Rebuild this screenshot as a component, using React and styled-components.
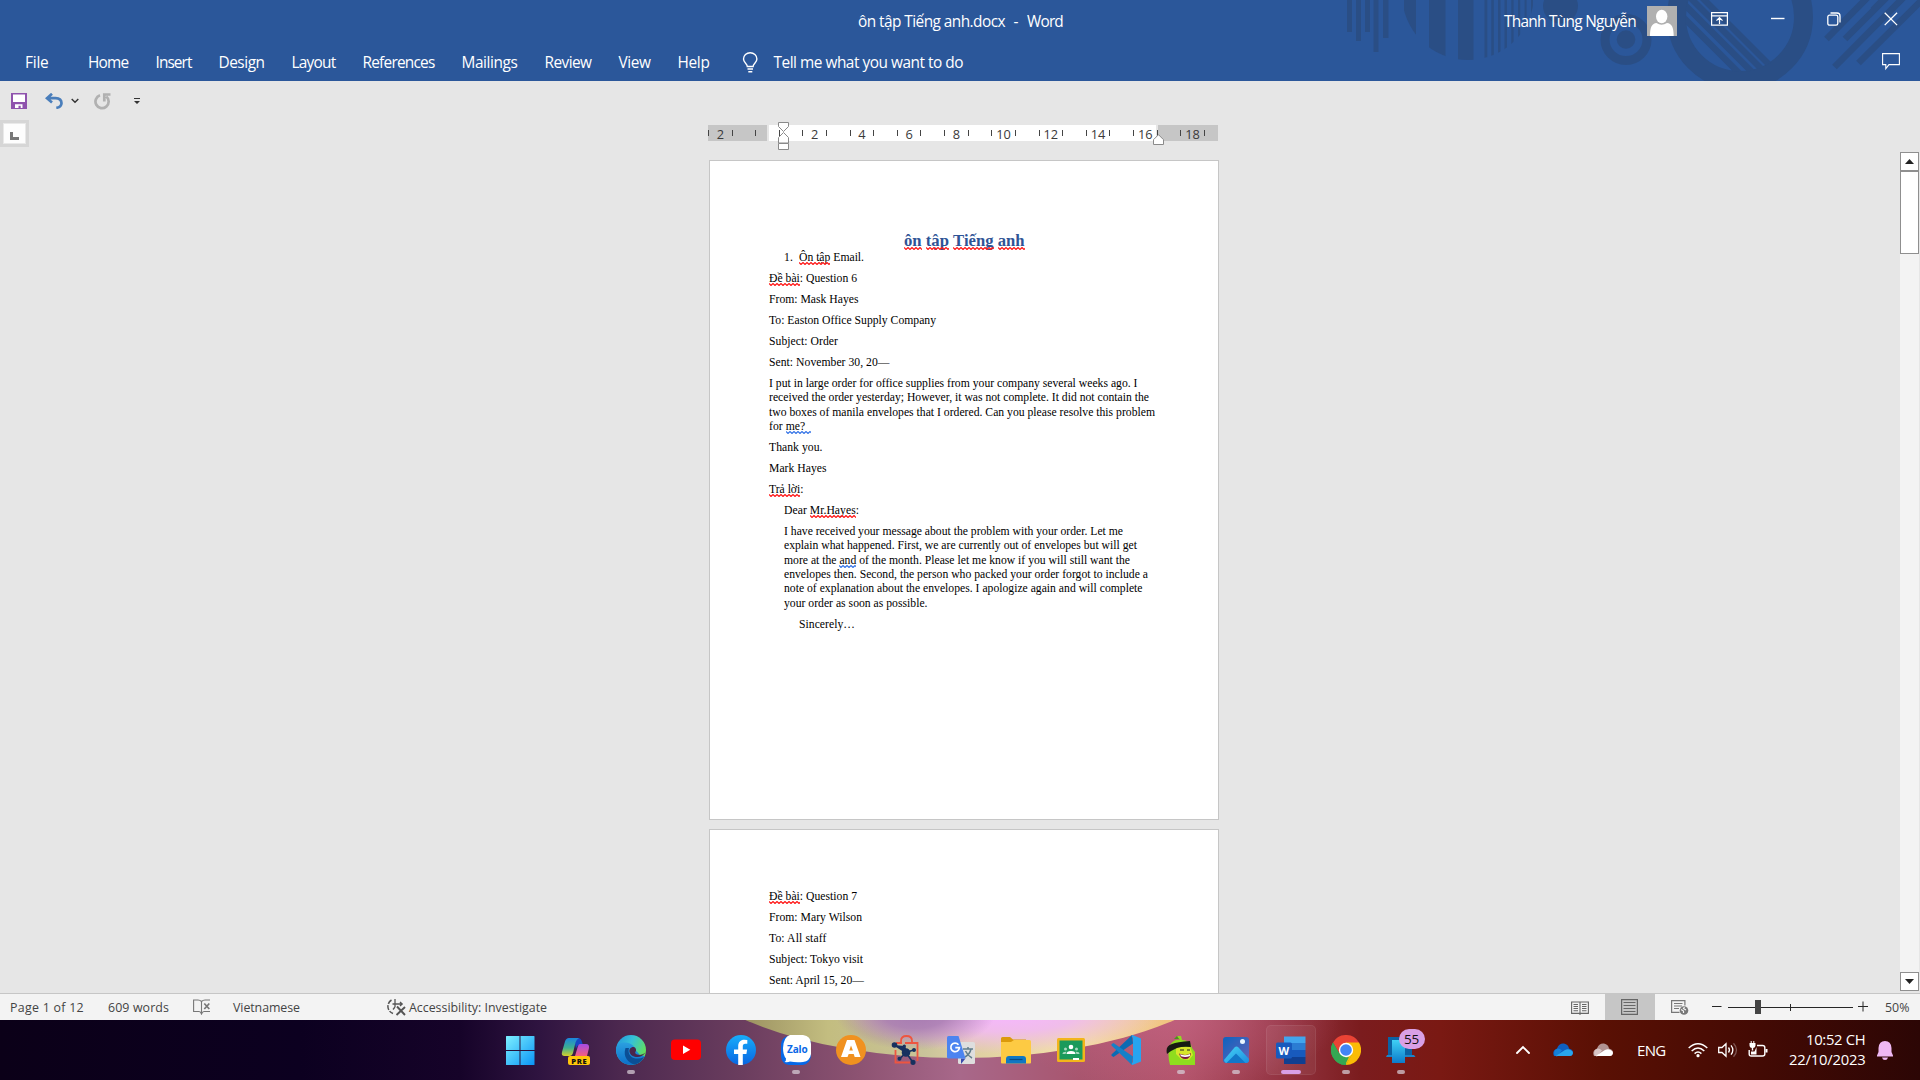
import React, { useLayoutEffect, useRef, useState } from "react";
import styled, { createGlobalStyle } from "styled-components";

const UI = `"Open Sans", "Noto Sans", sans-serif`;
const SERIF = `"Liberation Serif", "Times New Roman", serif`;

const Global = createGlobalStyle`
  * { box-sizing: border-box; }
  html, body { margin: 0; padding: 0; }
  body { width: 1920px; height: 1080px; overflow: hidden; font-family: ${UI}; background: #e6e6e6; }
  svg { display: block; flex: none; }
`;

/* Text that is tracked so that its run is exactly `w` pixels wide. */
const Run = styled.span`
  display: inline-block;
  white-space: pre;
`;
function Fit({ w, children }) {
  const ref = useRef(null);
  const [ls, setLs] = useState(0);
  useLayoutEffect(() => {
    const el = ref.current;
    const n = el.textContent.length;
    const natural = el.getBoundingClientRect().width;
    setLs((w - natural) / n);
  }, [w]);
  return <Run ref={ref} style={{ letterSpacing: `${ls}px` }}>{children}</Run>;
}

const Screen = styled.div`
  width: 1920px;
  height: 1080px;
  display: flex;
  flex-direction: column;
  overflow: hidden;
`;

/* ---------- header ---------- */
const Header = styled.header`
  position: relative;
  height: 81px;
  flex: none;
  background: #2b579a;
  color: #fff;
  font-size: 15.4px;
`;
const Pattern = styled.svg`
  position: absolute;
  right: 0;
  top: 0;
`;
const TitleBar = styled.div`
  position: relative;
  height: 42px;
  display: flex;
  align-items: center;
  padding-left: 858px;
`;
const FileName = styled.div`
  width: 646px;
  display: flex;
  gap: 8.5px;
  padding-top: 1.5px;
`;
const UserName = styled.div`
  width: 143px;
  padding-top: 1.5px;
`;
const WindowButtons = styled.div`
  display: flex;
  align-items: center;
  height: 30px;
  margin-left: 34px;
  padding-bottom: 4px;
  gap: 42.7px;
`;
const TabBar = styled.nav`
  position: relative;
  height: 39px;
  display: flex;
  align-items: center;
  gap: 27px;
  padding: 1px 20px 0 25px;
`;
const FileTab = styled.div`
  margin-right: 12.5px;
`;
const TellMe = styled.div`
  display: flex;
  align-items: center;
  gap: 15px;
  margin-left: 5px;
  flex: 1;
`;

const HeaderPattern = () => (
  <Pattern width="600" height="81" viewBox="1320 0 600 81" fill="#2a4e85">
    <defs>
      <clipPath id="ball"><circle cx="1468" cy="-6" r="66" /></clipPath>
      <clipPath id="lens"><circle cx="1740" cy="17" r="55" /></clipPath>
    </defs>
    <path d="M1347 0h5v32h-5zM1356 0h5v41h-5zM1365 0h5v32h-5zM1373.5 0h5v52h-5zM1383 0h5.5v38h-5.5z" />
    <g clipPath="url(#ball)">
      <path d="M1404 0h12v60h-12zM1429 0h16.500v70h-16.500zM1458 0h15.500v70h-15.500zM1484.500 0h2.800v70h-2.800zM1491.300 0h2.500v70h-2.500zM1498 0h2.500v70h-2.500zM1504.500 0h2.500v70h-2.500zM1511.300 0h2.300v70h-2.300zM1518 0h2.200v70h-2.200zM1524.600 0h2v70h-2zM1531 0h2v70h-2z" />
    </g>
    <circle cx="1560.500" cy="6" r="17.500" />
    <circle cx="1626" cy="39.500" r="21" fill="none" stroke="#2a4e85" strokeWidth="9" />
    <circle cx="1626" cy="39.500" r="9.300" />
    <circle cx="1740" cy="17" r="63.500" fill="none" stroke="#2a4e85" strokeWidth="19" />
    <g clipPath="url(#lens)" stroke="#2a4e85" strokeWidth="6.300">
      <path d="M1646 -20l110 110M1660 -20l110 110M1672.500 -20l110 110M1684.500 -20l110 110" />
    </g>
    <g stroke="#2a4e85" strokeWidth="6.600">
      <path d="M1826.500 39L1868 -3M1845 39L1888 -4M1834.500 67L1905 -4M1858.500 63L1926 -4M1873 10L1887 -4" />
    </g>
  </Pattern>
);

const TABS = [["Home", 40.5], ["Insert", 36], ["Design", 46], ["Layout", 44], ["References", 72], ["Mailings", 56], ["Review", 47], ["View", 32], ["Help", 32]];

function AppHeader() {
  return (
    <Header>
      <HeaderPattern />
      <TitleBar>
        <FileName>
          <Fit w={147}>ôn tập Tiếng anh.docx</Fit>
          <Fit w={5}>-</Fit>
          <Fit w={36}>Word</Fit>
        </FileName>
        <UserName><Fit w={132}>Thanh Tùng Nguyễn</Fit></UserName>
        <svg width="30" height="30" viewBox="0 0 30 30">
          <path fill="#b0b0b0" d="M0 0h30v30H0z" />
          <ellipse cx="14.700" cy="10.500" rx="5.700" ry="6.700" fill="#fff" />
          <path fill="#fff" d="M3 30C3 21 5 17.500 9.500 17q5 3.600 10.500 0c4.500.5 6.700 4 6.700 13z" />
        </svg>
        <WindowButtons>
          <svg width="17" height="14" fill="none" stroke="#fff" strokeWidth="1.200">
            <path d="M.6 .6h15.800v12.600H.6zM.6 3.800h15.800M8.500 12V6M5.500 8.600l3-3 3 3" />
          </svg>
          <svg width="14" height="14" stroke="#fff" strokeWidth="1.400"><path d="M0 6.500h13.500" /></svg>
          <svg width="14" height="14" fill="none" stroke="#fff" strokeWidth="1.300">
            <rect x=".8" y="3.200" width="10" height="10" rx="1.800" />
            <path d="M3.500 1h6.500q3 0 3 3v6.500" />
          </svg>
          <svg width="14" height="14" stroke="#fff" strokeWidth="1.300"><path d="M.7 .7l12.400 12.400M13.100 .7L.7 13.100" /></svg>
        </WindowButtons>
      </TitleBar>
      <TabBar>
        <FileTab><Fit w={23.5}>File</Fit></FileTab>
        {TABS.map(([t, w]) => <Fit key={t} w={w}>{t}</Fit>)}
        <TellMe>
          <svg width="17" height="21" viewBox="0 0 17 21" fill="none" stroke="#fff" strokeWidth="1.400">
            <path d="M5.300 14.500C5.300 11.500 1.500 10.800 1.500 7a6.700 6.300 0 0 1 13.400 0c0 3.800-3.800 4.500-3.800 7.500zM5.500 17h5.500M6.300 19.700h4" />
          </svg>
          <Fit w={189.5}>Tell me what you want to do</Fit>
        </TellMe>
        <svg width="18" height="18" fill="none" stroke="#fff" strokeWidth="1.100">
          <path d="M.6 .6h16.800v11H7l-3.200 4v-4H.6z" />
        </svg>
      </TabBar>
    </Header>
  );
}

/* ---------- quick access + ruler ---------- */
const QuickBar = styled.div`
  height: 39px;
  flex: none;
  display: flex;
  align-items: center;
  padding: 1px 0 0 11px;
`;
const Gap = styled.span`
  width: ${(p) => p.$w}px;
  flex: none;
`;
const RulerRow = styled.div`
  height: 32px;
  flex: none;
  display: flex;
  align-items: flex-start;
`;
const TabStop = styled.div`
  width: 29px;
  height: 27px;
  border: 3px solid #d6d6d6;
  background: #fdfdfd;
  box-shadow: inset 0 0 0 1px #e9e9e9;
  padding: 9px 0 0 7px;
`;
const Ruler = styled.div`
  position: relative;
  display: flex;
  margin: 5px 0 0 679px;
  width: 510px;
  height: 16px;
  overflow: visible;
  background: linear-gradient(90deg, #c6c6c6 59px, #e6e6e6 59px, #e6e6e6 61px, #fff 61px, #fff 448px, #e6e6e6 448px, #e6e6e6 450px, #c6c6c6 450px);
`;
const Cm = styled.div`
  flex: 0 0 ${(p) => (p.$last ? 1 : 23.62)}px;
  height: 16px;
  display: flex;
  align-items: center;
  font-size: 12.8px;
  color: #3a3a3a;
  span { flex: 1; text-align: center; white-space: nowrap; margin: 1px -4px 0; }
  &::before { content: ""; width: 1px; height: 6px; background: #444; flex: none; }
`;
const Marker = styled.svg`
  position: absolute;
  left: ${(p) => p.$x}px;
  top: ${(p) => p.$y}px;
`;

function RulerBar() {
  const cells = [];
  for (let n = -2; n <= 19; n++) cells.push(n);
  return (
    <RulerRow>
      <TabStop>
        <svg width="9" height="8"><path d="M0 0h3v5h6v3H0z" fill="#777" /></svg>
      </TabStop>
      <Ruler>
        {cells.map((n) => (
          <Cm key={n} $last={n === 19}><span>{n !== 0 && n % 2 === 0 ? Math.abs(n) : ""}</span></Cm>
        ))}
        <Marker $x={70} $y={-3} width="11" height="28" fill="#fff" stroke="#8a8a8a">
          <path d="M.5 .5h10v4l-5 5-5-5z M5.500 10.500l5 5v5.500H.500v-5.500z M.500 21.500h10v6H.500z" />
        </Marker>
        <Marker $x={445} $y={9} width="11" height="11" fill="#fff" stroke="#8a8a8a">
          <path d="M5.500 .7l5 5v4.800H.500V5.700z" />
        </Marker>
      </Ruler>
    </RulerRow>
  );
}

/* ---------- document ---------- */
const Workspace = styled.main`
  flex: none;
  height: 841px;
  display: flex;
  overflow: hidden;
`;
const Canvas = styled.div`
  flex: 1;
  display: flex;
  flex-direction: column;
  gap: 9px;
  padding: 8px 0 0 709px;
  overflow: hidden;
`;
const Page = styled.article`
  flex: none;
  width: 510px;
  height: 660px;
  border: 1px solid #c6c6c6;
  background: #fff;
  padding: 60px 59px 0;
  font-family: ${SERIF};
  font-size: 11.67px;
  line-height: 14.35px;
  color: #000;
`;
const Heading = styled.h1`
  margin: 0;
  height: 30px;
  padding: 10px 0 0 135px;
  font-size: 16.67px;
  line-height: 20.5px;
  font-weight: bold;
  color: #2f5496;
`;
const Para = styled.div`
  margin: 0 0 6.67px ${(p) => p.$indent || 0}px;
`;
const Line = styled.div`
  height: 14.35px;
  display: flex;
  white-space: pre;
`;
const Flagged = styled.span`
  position: relative;
  display: inline-block;
`;
const Wave = styled.svg`
  position: absolute;
  left: 0;
  bottom: ${(p) => (p.$big ? 2 : 0.5)}px;
  width: 100%;
  height: 3px;
`;
const Err = ({ children, color = "#ff1a1a", big }) => {
  const d = "M0 .5" + Array.from({ length: 40 }, (_, i) => `L${i * 4 + 2} 2.500L${i * 4 + 4} .5`).join("");
  return (
    <Flagged>
      {children}
      <Wave $big={big}><path d={d} fill="none" stroke={color} strokeWidth="1.200" /></Wave>
    </Flagged>
  );
};

const T = ({ indent, lines }) => (
  <Para $indent={indent}>
    {lines.map(([text, w], i) => <Line key={i}><Fit w={w}>{text}</Fit></Line>)}
  </Para>
);

function Document() {
  return (
    <Canvas>
      <Page>
        <Heading>
          <Fit w={120.5}><Err big>ôn</Err> <Err big>tập</Err> <Err big>Tiếng</Err> <Err big>anh</Err></Fit>
        </Heading>
        <Para $indent={15}>
          <Line><Fit w={9}>1.</Fit><Gap $w={6} /><Fit w={65}><Err>Ôn tập</Err> Email.</Fit></Line>
        </Para>
        <T lines={[[<><Err>Đề bài</Err>: Question 6</>, 88]]} />
        <T lines={[["From: Mask Hayes", 89.5]]} />
        <T lines={[["To: Easton Office Supply Company", 167]]} />
        <T lines={[["Subject: Order", 69]]} />
        <T lines={[["Sent: November 30, 20—", 120.5]]} />
        <T lines={[
          ["I put in large order for office supplies from your company several weeks ago. I", 368.5],
          ["received the order yesterday; However, it was not complete. It did not contain the", 380],
          ["two boxes of manila envelopes that I ordered. Can you please resolve this problem", 386],
          [<>for <Err color="#3b78e7">{"me?  "}</Err></>, 42],
        ]} />
        <T lines={[["Thank you.", 53.5]]} />
        <T lines={[["Mark Hayes", 57.5]]} />
        <T lines={[[<><Err>Trả lời</Err>:</>, 34.5]]} />
        <T indent={15} lines={[[<>Dear <Err>Mr.Hayes</Err>:</>, 75]]} />
        <T indent={15} lines={[
          ["I have received your message about the problem with your order. Let me", 339],
          ["explain what happened. First, we are currently out of envelopes but will get", 353],
          [<>more at the <Err color="#3b78e7">and</Err> of the month. Please let me know if you will still want the</>, 346],
          ["envelopes then. Second, the person who packed your order forgot to include a", 364],
          ["note of explanation about the envelopes. I apologize again and will complete", 358.500],
          ["your order as soon as possible.", 143.5],
        ]} />
        <T indent={30} lines={[["Sincerely…", 56]]} />
      </Page>
      <Page>
        <T lines={[[<><Err>Đề bài</Err>: Question 7</>, 88]]} />
        <T lines={[["From: Mary Wilson", 93]]} />
        <T lines={[["To: All staff", 57.5]]} />
        <T lines={[["Subject: Tokyo visit", 94]]} />
        <T lines={[["Sent: April 15, 20—", 95]]} />
      </Page>
    </Canvas>
  );
}

const Scroll = styled.div`
  width: 20px;
  display: flex;
  flex-direction: column;
  margin-bottom: 2px;
  padding-right: 1px;
`;
const Track = styled.div`
  flex: 1;
  background: #f3f3f3;
`;
const ScrollBox = styled.div`
  height: ${(p) => p.$h}px;
  flex: none;
  border: 1px solid #8f8f8f;
  background: #fff;
  display: flex;
  align-items: center;
  justify-content: center;
`;

/* ---------- status bar ---------- */
const Status = styled.footer`
  height: 27px;
  flex: none;
  display: flex;
  align-items: center;
  background: #f3f3f3;
  border-top: 1px solid #c6c6c6;
  padding-left: 10px;
  font-size: 12.4px;
  color: #444;
`;
const ViewButton = styled.div`
  width: 50px;
  height: 26px;
  display: flex;
  align-items: center;
  justify-content: center;
  background: ${(p) => (p.$on ? "#c6c6c6" : "transparent")};
`;

const StatusBar = () => (
  <Status>
    <Fit w={74}>Page 1 of 12</Fit><Gap $w={24} />
    <Fit w={61}>609 words</Fit><Gap $w={24} />
    <svg width="18" height="16" fill="none" stroke="#777" strokeWidth="1.100">
      <path d="M8.500 15V2.500Q7 1 5 1H.6v11.500h5.500q1.500 0 2.400 2.500 1-2.500 2.500-2.500h6M8.500 2.500Q10 1 12 1h5" />
      <path d="M11.300 4.500l5 5.500M16.300 4.500l-5 5.500" strokeWidth="1.700" />
    </svg>
    <Gap $w={22} /><Fit w={67}>Vietnamese</Fit><Gap $w={87} />
    <svg width="19" height="18" fill="none" stroke="#555" strokeWidth="1.300">
      <path d="M4.500 2A7.500 7.500 0 0 0 6 15.500" strokeDasharray="5 1.300" strokeWidth="1.500" />
      <path d="M8 1v8M5.500 6h9.500M13 4l2.200 2-2.200 2M8 9l-2 2.500" />
      <path d="M10 8.500l8 8.500M18 9l-8.500 8" strokeWidth="1.900" />
    </svg>
    <Gap $w={3} /><Fit w={138}>Accessibility: Investigate</Fit>
    <Gap $w={1007.5} />
    <ViewButton>
      <svg width="18" height="15" fill="none" stroke="#666" strokeWidth="1.100">
        <path d="M9 1.500V15M9 2H.6v11.400H9M9 2h8.400v11.400H9M2.500 4.500h4.500M2.500 6.500h4.500M2.500 8.500h4.500M2.500 10.700h4.500M11 4.500h4.500M11 6.500h4.500M11 8.500h4.500M11 10.700h4.500" />
      </svg>
    </ViewButton>
    <ViewButton $on>
      <svg width="17" height="16" fill="none" stroke="#666" strokeWidth="1.200">
        <path d="M.6 .6h15.800v14.800H.6zM2.500 3.500h12M2.500 6.500h12M2.500 9.500h12M2.500 12.500h12" />
      </svg>
    </ViewButton>
    <ViewButton>
      <svg width="18" height="16" fill="none" stroke="#777" strokeWidth="1.200">
        <path d="M8.500 13.400H.6V1.600h13.300v5M3 4.500h8.500M3 7h8M3 9.500h5" />
        <circle cx="13" cy="11.500" r="4.300" fill="#777" stroke="none" />
        <path d="M10 10.500l2.500 1.500 0 2M13.500 8l-1 1.500 2.500 1.500" stroke="#f3f3f3" />
      </svg>
    </ViewButton>
    <Gap $w={7.5} />
    <svg width="158" height="16" stroke="#262626" strokeWidth="1">
      <path d="M0 7.500h9.500M16 8.500h125M78.500 5v7M146 7.500h10M151 2.500v10" />
      <path d="M43 1h6v14h-6z" fill="#444" stroke="none" />
    </svg>
    <Gap $w={15} /><Fit w={24.500}>50%</Fit>
  </Status>
);

/* ---------- taskbar ---------- */
const TaskbarBox = styled.div`
  position: relative;
  height: 60px;
  flex: none;
  display: flex;
  align-items: center;
  padding-left: 493.5px;
  background: linear-gradient(90deg, #0b0018 0, #0c0020 300px, #160329 460px, #2f1440 540px, #4c284f 620px, #6a3d5e 740px, #8d5372 860px, #a8688a 960px, #a8556e 1080px, #b3546b 1180px, #973847 1270px, #7b1c1e 1360px, #7a1913 1440px, #5a1004 1600px, #430a04 1760px, #2c0605 1920px);
`;
const Wallpaper = styled.svg`
  position: absolute;
  left: 0;
  top: 0;
`;
const Slot = styled.div`
  position: relative;
  width: 55px;
  height: 60px;
  flex: none;
  display: flex;
  align-items: center;
  justify-content: center;
`;
const Tile = styled.div`
  width: 50px;
  height: 50px;
  display: flex;
  align-items: center;
  justify-content: center;
  border-radius: 5px;
  background: ${(p) => (p.$on ? "rgba(255,255,255,.06)" : "transparent")};
  box-shadow: ${(p) => (p.$on ? "inset 0 0 0 1px rgba(255,255,255,.07)" : "none")};
`;
const Dot = styled.div`
  position: absolute;
  bottom: 6px;
  left: 50%;
  transform: translateX(-50%);
  width: ${(p) => (p.$wide ? 20 : 8)}px;
  height: 4px;
  border-radius: 2px;
  background: ${(p) => (p.$wide ? "#d9a0e6" : "rgba(215,205,215,.72)")};
`;
const Badge = styled.div`
  position: absolute;
  left: 25px;
  top: 9px;
  width: 26px;
  height: 20px;
  border-radius: 10px;
  background: #d9a0e6;
  color: #111;
  font-size: 13.5px;
  line-height: 20px;
  text-align: center;
`;

const I = ({ children, ...p }) => <svg width="30" height="30" viewBox="0 0 30 30" {...p}>{children}</svg>;

const Start = () => (
  <I viewBox="1 0 30 30">
    <defs><linearGradient id="win" x1="0" y1="0" x2="1" y2="1" gradientUnits="objectBoundingBox"><stop offset="0" stopColor="#7df0ff" /><stop offset="1" stopColor="#0a94f5" /></linearGradient></defs>
    <path fill="url(#win)" d="M1 1.500Q1 1 1.500 1H14.500v14H1zM15.500 1h13.500q.5 0 .5.500V15h-14zM1 16h13.500v14H1.500q-.5 0-.5-.5zM15.500 16h14v13.500q0 .5-.5.500H15.500z" />
  </I>
);
const Copilot = () => (
  <I>
    <defs>
      <linearGradient id="cp1" x1="0" y1="0" x2="0" y2="1"><stop offset="0" stopColor="#1b86dd" /><stop offset=".55" stopColor="#3fb08f" /><stop offset="1" stopColor="#d6cf2a" /></linearGradient>
      <linearGradient id="cp2" x1="0" y1="0" x2="0" y2="1"><stop offset="0" stopColor="#a44be6" /><stop offset="1" stopColor="#f5607c" /></linearGradient>
    </defs>
    <path d="M13 3h4q3 0 4 4l1 3h-3q-3 0-4 4z" fill="#1648c4" />
    <path d="M8 3h10q-2.500 1-3.500 4.500L12 18q-1 3-3.500 3H3.500Q0 21 1 17L4 6.500Q5 3 8 3z" fill="url(#cp1)" />
    <path d="M19 9h6q3.500 0 3 4l-2 8H14l3-10q.7-2 2-2z" fill="url(#cp2)" />
    <rect x="7" y="21" width="22" height="9" rx="2" fill="#ffc60a" />
    <text x="18.300" y="28.500" textAnchor="middle" fontFamily="Open Sans" fontWeight="800" fontSize="7.600" letterSpacing=".6" fill="#111">PRE</text>
  </I>
);
const Edge = () => (
  <I>
    <defs>
      <linearGradient id="ed1" x1="0" y1="0" x2="1" y2=".5"><stop offset="0" stopColor="#2193dd" /><stop offset=".5" stopColor="#35c1d8" /><stop offset="1" stopColor="#63e05a" /></linearGradient>
      <linearGradient id="ed2" x1="0" y1="0" x2="0" y2="1"><stop offset="0" stopColor="#2ba0e0" /><stop offset="1" stopColor="#0c6fc9" /></linearGradient>
    </defs>
    <circle cx="15" cy="15" r="15" fill="url(#ed1)" />
    <path d="M0 14C1 8 6 7 9.500 7.500 15 8 19 11 19.500 15L24 20l5 1Q24 30 15 30 1 29 0 14z" fill="url(#ed2)" />
    <path d="M9.500 13c-3 9 3 15 9 16.500Q25 28 28 22q-4 2-8.500 1.500C14 22.500 11.500 18 13 13z" fill="#0b4f96" />
    <path d="M17.500 12c-3 0-4.500 2.500-4 5 .6 3 4 5 8 5 3 0 6.500-2 8-4.500-3 3-8 3-9.700 1.300-1.500-1.500.7-2.300.2-4.300-.3-1.500-1-2.500-2.500-2.500z" fill="#4a264c" />
  </I>
);
const YouTube = () => (
  <I><rect x="0" y="4.500" width="30" height="20.500" rx="4" fill="#f00" /><path d="M12 10.500l7.300 4.300-7.300 4.300z" fill="#fff" /></I>
);
const Facebook = () => (
  <I>
    <defs><linearGradient id="fb" x1="0" y1="0" x2="0" y2="1"><stop offset="0" stopColor="#18adfa" /><stop offset="1" stopColor="#0866e2" /></linearGradient></defs>
    <circle cx="15" cy="15" r="15" fill="url(#fb)" />
    <path d="M12.200 30V19H8v-4.500h4.200V11c0-4 2.500-6.300 6-6.300q1.500 0 3.100.3v3.700h-2c-2 0-2.500 1.200-2.500 2.500v3.300h4.300l-.7 4.500h-3.600v11z" fill="#fff" />
  </I>
);
const Zalo = () => (
  <I>
    <path d="M7 1h16q7 1 7 9v11q-1 8-8 9H8q-7-1-8-8V9q1-7 7-8z" fill="#0668e8" />
    <path d="M9 0h13q8 1 8 9v10q-1 7-8 8-7 .8-13-.5-2 1-5.500.5 1.800-1 1.500-3.500Q2 20 2 13 2.500 2 9 0z" fill="#fff" />
    <text x="16.300" y="17.500" textAnchor="middle" fontFamily="Open Sans" fontWeight="700" fontSize="10" letterSpacing="-.1" fill="#0a68e6">Zalo</text>
  </I>
);
const Orange = () => (
  <I>
    <circle cx="15" cy="15" r="15" fill="#f09120" />
    <path fillRule="evenodd" d="M11 5h7.500l6 17h-5.800l-1-3h-5l-1.200 3H5zM15 10.500L13.300 15.500h3.600z" fill="#fff" />
  </I>
);
const Bag = () => (
  <I>
    <path d="M10 9V6q0-5 5.500-5T21 6v2M14 8h12.500V26M4.500 15v12.500H20M5 8h6" fill="none" stroke="#ee5540" strokeWidth="1.800" />
    <g stroke="#17315f" strokeWidth="1.600" fill="#17315f">
      <path d="M3.500 10L15 17.500 13.500 11M15 17.500l7.500-2.500M15 17.500L9 23.500M15 17.500l7 10" />
      <circle cx="3.500" cy="10" r="2" /><circle cx="15" cy="17.500" r="3.500" /><circle cx="13.300" cy="11" r=".8" /><circle cx="23" cy="15" r="1.200" /><circle cx="8.500" cy="23.700" r="1.200" /><circle cx="22" cy="27.300" r="1.800" />
    </g>
  </I>
);
const Translate = () => (
  <I>
    <rect x="12" y="7" width="17" height="22" rx="1.500" fill="#dedede" />
    <path d="M17 14h10M22 12v2M25 14q-1 5-6 8M19.500 16q2 4.500 6.500 7" fill="none" stroke="#607d8b" strokeWidth="1.500" />
    <path d="M15 23.500h4.500L15 29z" fill="#3949ab" />
    <path d="M2.500 1h10l7 22.500H2.500Q1 23.500 1 22V2.500Q1 1 2.500 1z" fill="#4c84f0" />
    <path d="M12.500 9.700a4.300 4.300 0 1 0 .9 3H9.300" fill="none" stroke="#fff" strokeWidth="1.700" />
  </I>
);
const Explorer = () => (
  <I>
    <path d="M1.500 2H9l3 2.500h13V12H0V3.500Q0 2 1.500 2z" fill="#dc9a0b" />
    <path d="M0 7h10l3-2h15.500Q30 5 30 6.500V27.500q0 1-1 1H1q-1 0-1-1z" fill="#fdca43" />
    <path d="M5 28.500V24q0-3 3-3h14q3 0 3 3v4.500z" fill="#1077c2" /><path d="M8.500 24.500h13" stroke="#0a4a82" strokeWidth="1.200" />
  </I>
);
const Classroom = () => (
  <I>
    <rect x="1" y="3" width="28" height="24" rx="1.500" fill="#f3b51a" /><path d="M3.500 5.500h23v19h-23z" fill="#1a9a5b" />
    <circle cx="15" cy="12" r="2.300" fill="#fff" /><circle cx="9.500" cy="14" r="1.500" fill="#a4d8bd" /><circle cx="20.500" cy="14" r="1.500" fill="#a4d8bd" />
    <path d="M10.500 19q0-3 4.500-3t4.500 3z" fill="#fff" /><path d="M6.500 19q0-2.500 4-2.200l-1 2.200zM23.500 19q0-2.500-4-2.200l1 2.200z" fill="#a4d8bd" /><path d="M17 23h6v2h-6z" fill="#fff" />
  </I>
);
const VsCode = () => (
  <I>
    <path d="M22 0L6.500 14 2.500 10.500 1 11.500v2L22 30l1-9L14 15l9-6z" fill="none" />
    <path d="M.5 19.500L21 0l1 8.500L2.500 22 .5 20.700z" fill="#0b6bb3" />
    <path d="M.5 10.500L21 30l1-8.500L2.500 8 .5 9.300z" fill="#1580c8" />
    <path d="M21.500 0L30 3.500v23L21.500 30l-1-1 1.500-2V3l-1.500-2z" fill="#27a4f0" />
  </I>
);
const Bean = () => (
  <I>
    <path d="M4 10Q8 4 14 5l-3-4h4l1 4q8 0 10 8l3 4v13H4Q1 20 4 10z" fill="#8fdc1e" />
    <path d="M8 4l3-3 2 3z" fill="#46961c" />
    <path d="M10 12h14l3 8-4 5-8-1-5-5z" fill="#d7e62a" />
    <path d="M1 19Q-1 11 6 9q5-2 18-3l1 6q-8-1-14 1-5 2-10 6z" fill="#171a12" />
    <path d="M13 18.500q7 3 12-.5-1 6-5.500 6-5 0-6.500-5.500z" fill="#7a1640" /><path d="M14 19.300q5.500 2 10-.3v2q-4.500 1.700-9 .3z" fill="#fff" />
    <path d="M14 15h4M21 15h3" stroke="#222" strokeWidth="1" />
  </I>
);
const Photos = () => (
  <I>
    <defs>
      <linearGradient id="ph" x1="0" y1="0" x2="1" y2="1"><stop offset="0" stopColor="#0d63c0" /><stop offset="1" stopColor="#6a63b5" /></linearGradient>
      <linearGradient id="ph2" x1="0" y1="0" x2="1" y2="1"><stop offset="0" stopColor="#45d3f5" /><stop offset="1" stopColor="#1c8de0" /></linearGradient>
    </defs>
    <rect x="2" y="2" width="26" height="26" rx="3" fill="url(#ph)" />
    <path d="M3 25L13.500 12.500q2-2 4 0L28 24v1q0 3-3 3H5q-1.500 0-2-3z" fill="url(#ph2)" />
    <path d="M15 18.500L24.500 28H5.500z" fill="#1277c8" /><circle cx="21.500" cy="6.500" r="2.500" fill="#eaf6ff" />
  </I>
);
const Word = () => (
  <I>
    <path d="M8 1.500h21.500V8H8z" fill="#41a5ee" /><path d="M8 8h21.500v7H8z" fill="#2b7cd3" /><path d="M8 15h21.500v7H8z" fill="#185abd" /><path d="M8 22h21.500v7H8z" fill="#103f91" />
    <rect x="0" y="7.500" width="16" height="16" rx="1.500" fill="#185abd" />
    <text x="7.800" y="19.500" textAnchor="middle" fontFamily="Open Sans" fontWeight="700" fontSize="11" fill="#fff">W</text>
  </I>
);
const Chrome = () => (
  <I>
    <path d="M15 15L2 7.500A15 15 0 0 1 28 7.500z" fill="#ea4335" /><path d="M15 15V7.500h13A15 15 0 0 1 15 30z" fill="#fbbc05" />
    <path d="M15 30A15 15 0 0 1 2 7.500L8.500 18.500 15 15l6.500 3.500z" fill="#34a853" /><path d="M15 30l7-12-7-3z" fill="#fbbc05" />
    <path d="M2 7.500L8.500 18.500 15 15V7.500z" fill="#ea4335" />
    <path d="M2 7.500L8.500 18.800Q12 23 18 22l-4 8A15 15 0 0 1 2 7.500z" fill="#34a853" />
    <circle cx="15" cy="15" r="7.200" fill="#fff" /><circle cx="15" cy="15" r="5.800" fill="#4285f4" />
  </I>
);
const Phone = () => (
  <I>
    <path d="M2 2h24v18H2z" fill="#0b62a4" /><path d="M1 20h27l1.500 2H0z" fill="#1a84c9" />
    <defs><linearGradient id="pl" x1="0" y1="0" x2="0" y2="1"><stop offset="0" stopColor="#3fd0f5" /><stop offset="1" stopColor="#0c7bcb" /></linearGradient></defs>
    <path d="M6 5h13v23H6z" fill="url(#pl)" />
  </I>
);

const APPS = [
  [Start], [Copilot], [Edge, 1], [YouTube], [Facebook], [Zalo, 1], [Orange], [Bag], [Translate], [Explorer],
  [Classroom], [VsCode], [Bean, 1], [Photos, 1], [Word, 2], [Chrome, 1], [Phone, 1],
];

const Tray = styled.div`
  position: relative;
  margin-left: 87.5px;
  display: flex;
  align-items: center;
  color: #fff;
  font-size: 15px;
`;
const Clock = styled.div`
  width: 78px;
  padding-bottom: 2px;
  font-size: 14.800px;
  line-height: 20px;
  text-align: right;
`;

const Taskbar = () => (
  <TaskbarBox>
    <Wallpaper width="1920" height="60">
      <defs>
        <linearGradient id="glow" gradientUnits="userSpaceOnUse" x1="740" y1="0" x2="1180" y2="0">
          <stop offset="0" stopColor="#9a9060" /><stop offset=".2" stopColor="#c3bd80" /><stop offset=".42" stopColor="#c9c39a" /><stop offset=".5" stopColor="#dccda2" /><stop offset=".75" stopColor="#f4e2a6" /><stop offset="1" stopColor="#f0c07c" />
        </linearGradient>
        <radialGradient id="core" gradientUnits="userSpaceOnUse" cx="0" cy="0" r="1" gradientTransform="translate(1005 -6) scale(160 40)">
          <stop offset="0" stopColor="#f6b6ff" /><stop offset=".45" stopColor="#f0bdea" /><stop offset="1" stopColor="#eebce6" stopOpacity="0" />
        </radialGradient>
        <radialGradient id="shade" gradientUnits="userSpaceOnUse" cx="0" cy="0" r="1" gradientTransform="translate(915 -6) scale(80 36)">
          <stop offset="0" stopColor="#a67ab0" /><stop offset=".4" stopColor="#a67ab0" stopOpacity=".85" /><stop offset="1" stopColor="#a67ab0" stopOpacity="0" />
        </radialGradient>
        <radialGradient id="rose" gradientUnits="userSpaceOnUse" cx="0" cy="0" r="1" gradientTransform="translate(1170 0) scale(170 70)">
          <stop offset="0" stopColor="#c46483" stopOpacity=".7" /><stop offset="1" stopColor="#c46483" stopOpacity="0" />
        </radialGradient>
        <clipPath id="arc"><ellipse cx="960" cy="-82" rx="294" ry="120" /></clipPath>
      </defs>
      <path d="M980 0h360v60H980z" fill="url(#rose)" />
      <g clipPath="url(#arc)">
        <path d="M700 0h520v60H700z" fill="url(#glow)" />
        <path d="M800 0h380v60H800z" fill="url(#core)" />
        <path d="M800 0h210v60H800z" fill="url(#shade)" />
      </g>
    </Wallpaper>
    {APPS.map(([Icon, state], i) => (
      <Slot key={i}>
        <Tile $on={state === 2}><Icon /></Tile>
        {state ? <Dot $wide={state === 2} /> : null}
        {Icon === Phone ? <Badge><Fit w={15}>55</Fit></Badge> : null}
      </Slot>
    ))}
    <Tray>
      <svg width="14" height="10" fill="none" stroke="#fff" strokeWidth="1.900"><path d="M1 8l6-6 6 6" strokeLinecap="round" /></svg>
      <Gap $w={23} />
      <svg width="20" height="14"><path d="M1 13Q-1.500 8 4 5.500 6 0 11 .5q4.500 1 5 5 4 1 4 4-.5 3.500-3.500 3.500H4q-2 0-3 0z" fill="#0f5fc0" /><path d="M1.500 12.500Q0 6 5 5.500q2 0 4 2l-5 6z" fill="#1480d8" /><path d="M3 12.700L12 7q3-1.500 5.500 0 2.500 1 2.500 3-.5 3-3 3H5z" fill="#29a6ec" /></svg>
      <Gap $w={20} />
      <svg width="20" height="14"><path d="M1 13Q-1.500 8 4 5.500 6 0 11 .5q4.500 1 5 5 4 1 4 4-.5 3.500-3.500 3.500H4q-2 0-3 0z" fill="#b09292" /><path d="M1.500 12.500Q0 6 5 5.500q2 0 4 2l-5 6z" fill="#d8c6c6" /><path d="M3 12.700L12 7q3-1.500 5.500 0 2.500 1 2.500 3-.5 3-3 3H5z" fill="#fff" /></svg>
      <Gap $w={24} /><Fit w={28.500}>ENG</Fit><Gap $w={22.500} />
      <svg width="20" height="16" fill="none" stroke="#fff" strokeWidth="1.500"><path d="M.7 6Q10-2.500 19.300 6M3.700 9Q10 3 16.300 9M6.600 11.600Q10 8.300 13.400 11.600" /><circle cx="10" cy="13.700" r="1.600" fill="#fff" stroke="none" /></svg>
      <Gap $w={10} />
      <svg width="20" height="16" fill="none" stroke="#fff" strokeWidth="1.300"><path d="M.7 5.500H4L8 1.700v12.600L4 10.500H.7zM10.500 5.500q2 2.500 0 5M13 3.300q3.700 4.700 0 9.400" /><path d="M15.500 1.200q6 6.800 0 13.600" stroke="#7d5450" /></svg>
      <Gap $w={10} />
      <svg width="20" height="18" fill="none" stroke="#fff" strokeWidth="1.400"><path d="M9 4.500h5.500q2.300 0 2.300 2v6.500q0 2-2.300 2H3.200q-2 0-2-2V9" /><path d="M17.500 8h2v3.500h-2z" fill="#fff" stroke="none" /><path d="M2.700 0h1v2h1.600V0h1v2h1.200v2.500q0 2-2.300 2.500v2.500H3.800V7Q1.500 6.500 1.500 4.500V2h1.200zM3 13.500v-3h3.500L8.500 6v7.500z" fill="#fff" stroke="none" /></svg>
      <Gap $w={19.500} />
      <Clock><Fit w={59.500}>10:52 CH</Fit><br /><Fit w={76.500}>22/10/2023</Fit></Clock>
      <Gap $w={11.500} />
      <svg width="16" height="19" fill="#efb8f3"><path d="M8 0q6 0 6.500 7v4L16 14.500v1H0v-1L1.500 11V7Q2 0 8 0zM5 16.500h6q-.6 2.500-3 2.500t-3-2.500z" /></svg>
    </Tray>
  </TaskbarBox>
);

export default function App() {
  return (
    <Screen>
      <Global />
      <AppHeader />
      <QuickBar>
        <svg width="16" height="16"><path d="M0 0h16v16H0z" fill="#8f53ad" /><path d="M2 1.500h12V9H2zM4 11.300h7.500V15H9.700v-2.200H7.500V15H4z" fill="#fff" /></svg>
        <Gap $w={18} />
        <svg width="18" height="16" fill="none" stroke="#4a7ebb" strokeWidth="2.700"><path d="M7 .8L2 5.200l5 4.300M2 5.200h8.500q6 .3 6 5-.2 4-5.200 4.600" /></svg>
        <Gap $w={8} />
        <svg width="8" height="6" fill="none" stroke="#333" strokeWidth="1.400"><path d="M.7 1l3.300 3.300L7.300 1" /></svg>
        <Gap $w={14.5} />
        <svg width="17" height="17" fill="none" stroke="#b1b1b1" strokeWidth="2.700"><path d="M6 2.300A6.600 6.600 0 1 0 12.300 3.500M10.300 8.500V1.500H16.500" /></svg>
        <Gap $w={23} />
        <svg width="6" height="8" fill="#333"><path d="M0 1h6v1H0zM0 4h6l-3 3z" /></svg>
      </QuickBar>
      <RulerBar />
      <Workspace>
        <Document />
        <Scroll>
          <ScrollBox $h={19}><svg width="9" height="5"><path d="M0 5L4.500 0 9 5z" fill="#222" /></svg></ScrollBox>
          <ScrollBox $h={83} />
          <Track />
          <ScrollBox $h={19}><svg width="9" height="5"><path d="M0 0h9L4.500 5z" fill="#222" /></svg></ScrollBox>
        </Scroll>
      </Workspace>
      <StatusBar />
      <Taskbar />
    </Screen>
  );
}
